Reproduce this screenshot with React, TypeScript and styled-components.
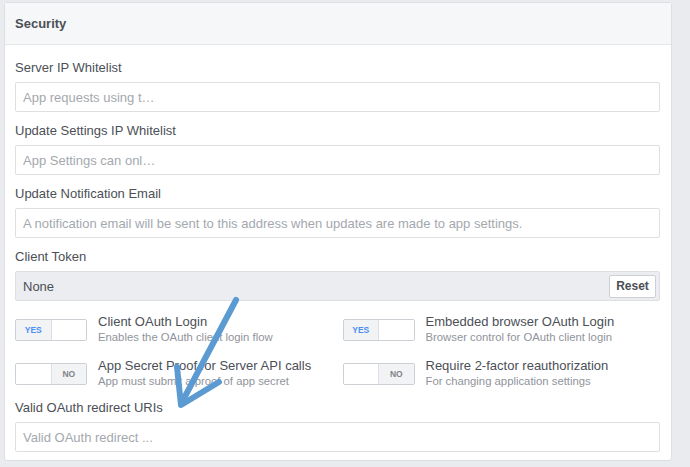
import React from "react";
import styled, { createGlobalStyle } from "styled-components";

const GlobalStyle = createGlobalStyle`
  html, body {
    margin: 0;
    padding: 0;
    background: #e9ebee;
    font-family: "Liberation Sans", Arial, sans-serif;
  }
  * {
    box-sizing: border-box;
  }
`;

const fields = [
  { label: "Server IP Whitelist", placeholder: "App requests using t…" },
  { label: "Update Settings IP Whitelist", placeholder: "App Settings can onl…" },
  {
    label: "Update Notification Email",
    placeholder:
      "A notification email will be sent to this address when updates are made to app settings.",
  },
];

const toggles = [
  { on: true, title: "Client OAuth Login", desc: "Enables the OAuth client login flow" },
  { on: true, title: "Embedded browser OAuth Login", desc: "Browser control for OAuth client login" },
  { on: false, title: "App Secret Proof for Server API calls", desc: "App must submit a proof of app secret" },
  { on: false, title: "Require 2-factor reauthorization", desc: "For changing application settings" },
];

export default function App() {
  return (
    <Page>
      <GlobalStyle />
      <Card>
        <CardHeader>Security</CardHeader>
        <CardBody>
          {fields.map((f) => (
            <Field key={f.label}>
              <Label>{f.label}</Label>
              <TextInput type="text" placeholder={f.placeholder} />
            </Field>
          ))}
          <Field>
            <Label>Client Token</Label>
            <TokenBox>
              <span>None</span>
              <ResetButton>Reset</ResetButton>
            </TokenBox>
          </Field>
          <ToggleGrid>
            {toggles.map((t) => (
              <ToggleRow key={t.title}>
                <Switch>
                  <SwitchHalf $active={t.on}>{t.on ? "YES" : ""}</SwitchHalf>
                  <SwitchHalf $active={!t.on} $off>
                    {t.on ? "" : "NO"}
                  </SwitchHalf>
                </Switch>
                <ToggleText>
                  <ToggleTitle>{t.title}</ToggleTitle>
                  <ToggleDesc>{t.desc}</ToggleDesc>
                </ToggleText>
              </ToggleRow>
            ))}
          </ToggleGrid>
          <Field>
            <Label>Valid OAuth redirect URIs</Label>
            <TextInput type="text" placeholder="Valid OAuth redirect ..." />
          </Field>
        </CardBody>
      </Card>
      <Arrow width="690" height="467" viewBox="0 0 690 467">
        <g
          fill="none"
          stroke="#5b9bd2"
          strokeWidth="6"
          strokeLinecap="round"
          strokeLinejoin="round"
        >
          <path d="M236 300 L181 404" />
          <path d="M177 367 L181 405 L219 382" />
        </g>
      </Arrow>
    </Page>
  );
}

const Page = styled.div`
  position: relative;
  width: 690px;
  height: 467px;
  padding: 2px 0 0 4px;
  overflow: hidden;
`;

const Card = styled.div`
  width: 668px;
  background: #fff;
  border: 1px solid #dddfe2;
  border-radius: 3px;
`;

const CardHeader = styled.div`
  height: 42px;
  padding: 0 10px;
  display: flex;
  align-items: center;
  background: #f6f7f9;
  border-bottom: 1px solid #e5e6e9;
  font-size: 13px;
  font-weight: bold;
  color: #4b4f56;
`;

const CardBody = styled.div`
  padding: 15px 11px 8px 10px;
  display: flex;
  flex-direction: column;
  gap: 11px;
`;

const Field = styled.div`
  display: flex;
  flex-direction: column;
`;

const Label = styled.label`
  font-size: 13px;
  line-height: 16px;
  color: #4b4f56;
  margin-bottom: 6px;
`;

const TextInput = styled.input`
  width: 100%;
  height: 30px;
  padding: 0 7px;
  border: 1px solid #dddfe2;
  border-radius: 2px;
  font-family: "Liberation Sans", Arial, sans-serif;
  font-size: 13px;
  color: #1d2129;
  outline: none;

  &::placeholder {
    color: #a4a8ae;
  }
`;

const TokenBox = styled.div`
  height: 30px;
  padding: 0 3px 0 7px;
  display: flex;
  align-items: center;
  justify-content: space-between;
  background: #ebedf0;
  border: 1px solid #dddfe2;
  border-radius: 2px;
  font-size: 13px;
  color: #4b4f56;
`;

const ResetButton = styled.button`
  height: 23px;
  width: 47px;
  padding: 0;
  background: #fff;
  border: 1px solid #ccd0d5;
  border-radius: 2px;
  font-family: "Liberation Sans", Arial, sans-serif;
  font-size: 12px;
  font-weight: bold;
  color: #4b4f56;
`;

const ToggleGrid = styled.div`
  display: grid;
  grid-template-columns: 1fr 1fr;
  column-gap: 10px;
  row-gap: 13px;
  margin-top: 2px;
`;

const ToggleRow = styled.div`
  display: flex;
  align-items: center;
  gap: 11px;
`;

const Switch = styled.div`
  display: flex;
  width: 72px;
  height: 22px;
  flex-shrink: 0;
  border: 1px solid #ccd0d5;
  border-radius: 2px;
  overflow: hidden;
`;

const SwitchHalf = styled.div<{ $active: boolean; $off?: boolean }>`
  flex: 1;
  display: flex;
  align-items: center;
  justify-content: center;
  font-size: 8.5px;
  font-weight: bold;
  color: ${(p) => (p.$off ? "#7f838a" : "#4b8ff6")};
  background: ${(p) => (p.$active ? "#f2f3f5" : "#fff")};
  border-left: ${(p) => (p.$off ? "1px solid #dddfe2" : "none")};
`;

const ToggleText = styled.div`
  display: flex;
  flex-direction: column;
`;

const ToggleTitle = styled.div`
  font-size: 13px;
  line-height: 16px;
  color: #4b4f56;
`;

const ToggleDesc = styled.div`
  font-size: 11.3px;
  line-height: 15px;
  color: #90949c;
`;

const Arrow = styled.svg`
  position: absolute;
  left: 0;
  top: 0;
  pointer-events: none;
`;
